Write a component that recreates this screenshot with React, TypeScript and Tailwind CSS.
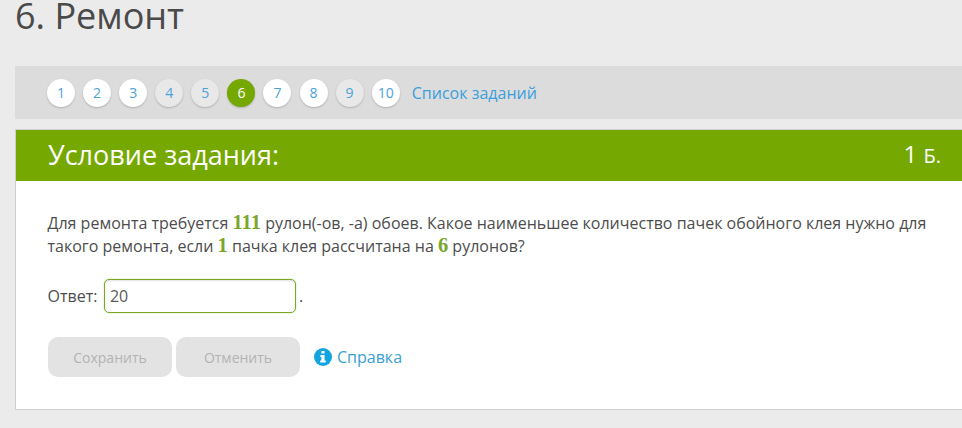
const pages = [
  { n: 1, state: 'saved' },
  { n: 2, state: 'saved' },
  { n: 3, state: 'saved' },
  { n: 4, state: 'open' },
  { n: 5, state: 'open' },
  { n: 6, state: 'current' },
  { n: 7, state: 'saved' },
  { n: 8, state: 'saved' },
  { n: 9, state: 'open' },
  { n: 10, state: 'saved' },
]

function PageDot({ n, state }: { n: number; state: string }) {
  const tone =
    state === 'current'
      ? 'bg-[#75a800] text-white'
      : state === 'open'
        ? 'bg-[#e8e8e8] text-[#4aa3d8]'
        : 'bg-white text-[#4aa3d8]'
  return (
    <a className={`flex h-[28px] w-[28px] shrink-0 items-center justify-center rounded-full text-[14px] shadow-[0_1px_2px_rgba(0,0,0,0.2)] ${tone}`}>
      {n}
    </a>
  )
}

function Num({ children }: { children: React.ReactNode }) {
  return <span className="font-['Liberation_Serif',serif] text-[20.5px] leading-none font-bold text-[#7ba62c]">{children}</span>
}

export default function App() {
  return (
    <div className="h-[428px] w-[962px] overflow-hidden bg-[#ebebeb] pl-[15px] font-['Open_Sans',sans-serif] text-[#4d4d4d]">
      <h1 className="mt-[-9px] h-[75px] text-[36px] leading-[50px] text-[#4a4a4a]">6. Ремонт</h1>

      <nav className="flex h-[53px] w-[960px] items-center gap-[8.08px] bg-[#dcdcdc] pl-[32px]">
        {pages.map((p) => (
          <PageDot key={p.n} n={p.n} state={p.state} />
        ))}
        <a className="ml-[4px] text-[16px] text-[#3a9fdc]">Список заданий</a>
      </nav>

      <section className="mt-[10px] h-[281px] w-[960px] border border-[#cfcfcf] bg-white">
        <header className="flex h-[51px] items-center justify-between bg-[#75a800] pb-[3px] pl-[32px] pr-[33px] text-white">
          <h2 className="text-[27px] leading-none">Условие задания:</h2>
          <span className="text-[24px] leading-none">
            1 <span className="text-[20px]">Б.</span>
          </span>
        </header>

        <div className="pl-[32px] pt-[31px]">
          <p className="-ml-[0.5px] w-[900px] text-[16px] leading-[22.5px]">
            Для ремонта требуется <Num>111</Num> рулон(-ов, -а) обоев. Какое наименьшее количество пачек обойного клея нужно для такого ремонта, если <Num>1</Num> пачка клея рассчитана на <Num>6</Num> рулонов?
          </p>

          <div className="mt-[22px] flex items-center text-[16px]">
            <span className="-ml-[0.5px]">Ответ:</span>
            <input
              readOnly
              value="20"
              className="ml-[6.5px] h-[34px] w-[192px] rounded-[5px] border border-[#7da628] bg-white px-[5px] text-[16px] text-[#5a5a5a] shadow-[inset_0_1px_2px_rgba(0,0,0,0.12),0_0_2px_rgba(117,168,0,0.35)] outline-none"
            />
            <span className="ml-[3px]">.</span>
          </div>

          <div className="mt-[24px] flex items-center gap-[4px]">
            <button className="h-[40px] w-[124px] rounded-[10px] bg-[#e3e3e3] text-[14px] text-[#b3b3b3]">Сохранить</button>
            <button className="h-[40px] w-[124px] rounded-[10px] bg-[#e3e3e3] text-[14px] text-[#b3b3b3]">Отменить</button>
            <a className="ml-[10px] flex items-center gap-[5px] text-[16px] text-[#3a9fd0]">
              <svg viewBox="0 0 18 18" className="-mt-[1px] h-[18px] w-[18px]">
                <circle cx="9" cy="9" r="9" fill="#12a5e0" />
                <path d="M7.4 3h3.2v2.6H7.4zM6.4 7h4.2v5.4h1.2v2H6.2v-2h1.2V9H6.4z" fill="#fff" />
              </svg>
              Справка
            </a>
          </div>
        </div>
      </section>
    </div>
  )
}
